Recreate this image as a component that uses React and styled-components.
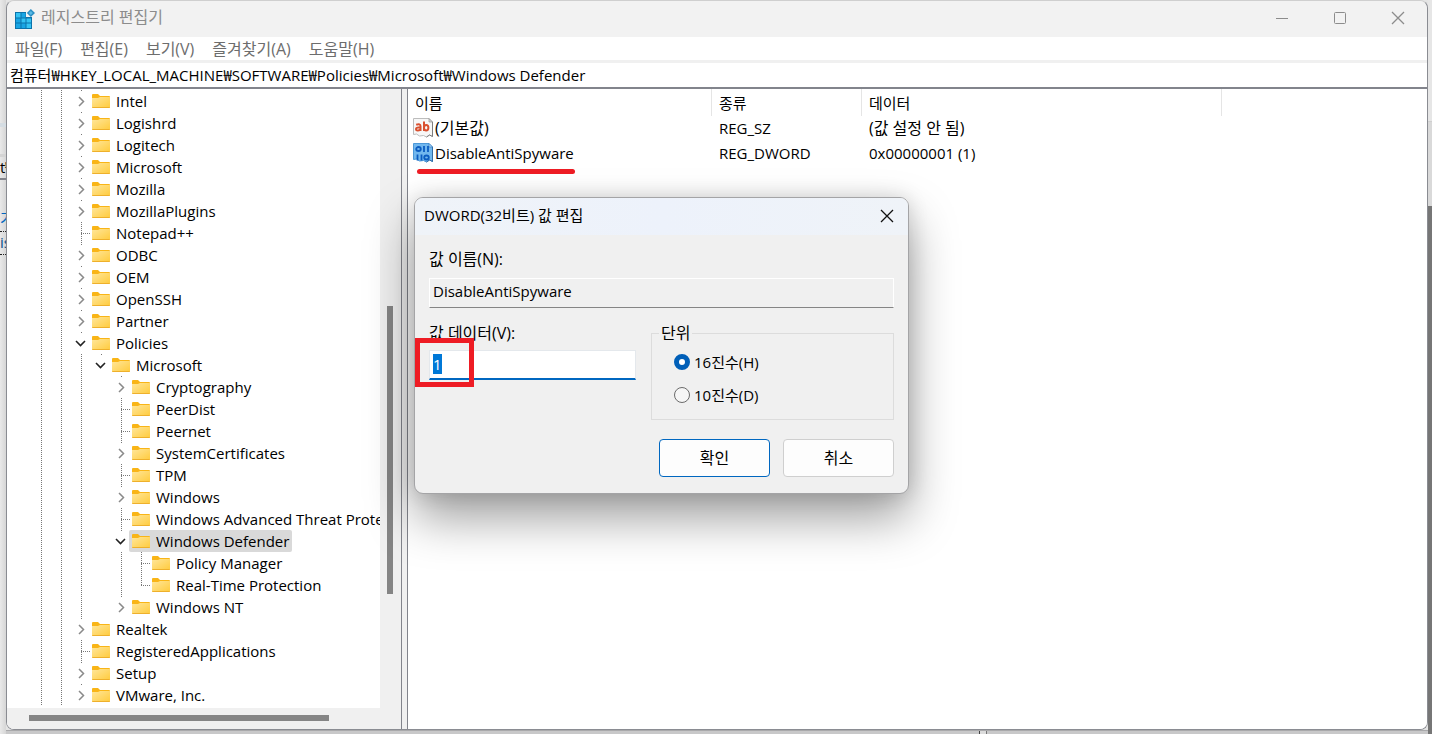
import React, { useEffect, useRef, useState } from "react";
import styled, { createGlobalStyle } from "styled-components";

const GlobalStyle = createGlobalStyle`
  *, *::before, *::after { box-sizing: border-box; }
  body {
    margin: 0;
    overflow: hidden;
    color: #000;
    font-family: "Open Sans", "Noto Sans CJK KR", sans-serif;
    font-size: 15px;
    line-height: 20px;
  }
  button, input { font: inherit; color: inherit; }
`;

const Desktop = styled.div`
  display: grid;
  grid-template-columns: 6px minmax(0, 1fr) 4px;
  grid-template-rows: minmax(0, 1fr) 4px;
  height: 100vh;
  background: #e4e4e4;
`;

const LeftBackdrop = styled.div`
  grid-row: 1 / 3;
  display: flex;
  flex-direction: column;
  overflow: hidden;
  white-space: nowrap;
  background: linear-gradient(90deg, #e9e9e9, #d6d6d6);
`;

const BackdropStrip = styled.div`
  flex: none;
  height: ${(p) => p.$h}px;
  background: ${(p) => p.$bg || "transparent"};
  color: ${(p) => p.$color || "#000"};
  border-bottom: ${(p) => p.$line || "none"};
`;

const RightBackdrop = styled.div`
  grid-column: 3;
  grid-row: 1 / 3;
  display: flex;
  flex-direction: column;
  background: #767676;
`;

const BottomBackdrop = styled.div`
  grid-column: 2;
  grid-row: 2;
  display: flex;
  padding-left: 973px;
  background: #c8c8c9;
  border-top: 1px solid #a9a9ab;
`;

const PaneEdge = styled.span`
  width: 8px;
  background: #dcdcdc;
  border-left: 1px solid #444;
  border-right: 1px solid #777;
`;

const Window = styled.main`
  position: relative;
  display: flex;
  flex-direction: column;
  min-width: 0;
  background: #f0f0f0;
  border: 1px solid #8a8c92;
  border-top-color: #cfcfcf;
  border-radius: 8px;
`;

const TitleBar = styled.header`
  display: flex;
  align-items: center;
  flex: none;
  height: 36px;
  padding-left: 8px;
  background: #f2f2f2;
  border-radius: 8px 8px 0 0;
  color: #8c8c8c;
`;

const WindowTitle = styled.h1`
  flex: 1;
  margin: 0 0 0 6px;
  padding-bottom: 4px;
  font-size: 16px;
  font-weight: 400;
  line-height: 20px;
`;

const CaptionButton = styled.button`
  display: grid;
  place-items: center;
  width: ${(p) => p.$w || 58}px;
  height: ${(p) => p.$h || 36}px;
  padding: 0 0 2px;
  border: 0;
  background: transparent;
`;

const MenuBar = styled.nav`
  display: flex;
  align-items: center;
  flex: none;
  gap: 18px;
  height: 23px;
  padding-left: 8px;
  background: #fff;
`;

const MenuButton = styled.button`
  padding: 0;
  border: 0;
  background: transparent;
  color: #6d6d6d;
  font-size: 16px;
  line-height: 20px;
`;

const AddressInput = styled.input`
  flex: none;
  display: block;
  height: 29px;
  width: 100%;
  padding: 0 3px 1px;
  border: 0;
  border-top: 3px solid #f0f0f0;
  border-bottom: 2px solid #82848c;
  border-radius: 0;
  outline: 0;
  background: #fff;
`;

const Body = styled.div`
  display: grid;
  grid-template-columns: 395px minmax(0, 1fr);
  gap: 5px;
  flex: 1;
  min-height: 0;
`;

const TreePane = styled.section`
  display: grid;
  grid-template-columns: minmax(0, 1fr) 21px;
  grid-template-rows: minmax(0, 1fr) 21px;
  min-height: 0;
  border-right: 1px solid #82848c;
  border-radius: 0 0 0 7px;
  background: #f0f0f0;
`;

const TreeView = styled.ul`
  margin: 0;
  padding: 1px 0 0 24px;
  overflow: hidden;
  list-style: none;
  background: #fff;
`;

const TreeRow = styled.li`
  display: flex;
  height: 22px;
  white-space: nowrap;
`;

const dots = "repeating-linear-gradient(#777 0 1px, transparent 1px 2px)";

const Guide = styled.span`
  flex: none;
  width: 20px;
  height: 22px;
  background-image: ${(p) => (p.$on ? dots : "none")};
  background-size: 1px 100%;
  background-position: 10px 0;
  background-repeat: no-repeat;
`;

const Branch = styled(Guide)`
  background-image: ${dots}, repeating-linear-gradient(90deg, #777 0 1px, transparent 1px 2px);
  background-size: 1px ${(p) => (p.$last ? "12px" : "100%")}, 9px 1px;
  background-position: 10px 0, 10px 11px;
`;

const Toggle = styled.button`
  flex: none;
  display: grid;
  place-items: center;
  width: 20px;
  height: 22px;
  padding: 0;
  border: 0;
  background: linear-gradient(#777, #777) 10px 0 / 1px 1px no-repeat;
`;

const NodeLabel = styled.span`
  display: flex;
  align-items: center;
  gap: 6px;
  height: 22px;
  margin-left: -2px;
  padding: 0 3px;
  border-radius: 2px;
  background: ${(p) => (p.$selected ? "#d9d9d9" : "transparent")};
`;

const ScrollTrack = styled.div`
  display: flex;
  flex-direction: ${(p) => (p.$vertical ? "column" : "row")};
  align-items: center;
  padding-right: ${(p) => (p.$vertical ? 2 : 0)}px;
  padding-bottom: ${(p) => (p.$vertical ? 0 : 2)}px;
  background: #f0f0f0;
  border-radius: 0 0 0 7px;
`;

const Space = styled.span`
  flex: ${(p) => p.$n} 0 0;
`;

const Thumb = styled.span`
  flex: ${(p) => p.$n} 0 0;
  ${(p) => (p.$vertical ? "width" : "height")}: 6px;
  background: #858585;
`;

const ListPane = styled.section`
  position: relative;
  min-width: 0;
  border-left: 1px solid #82848c;
  border-radius: 0 0 7px 0;
  background: #fff;
`;

const ValueTable = styled.table`
  width: 100%;
  table-layout: fixed;
  border-collapse: separate;
  border-spacing: 0;
  white-space: nowrap;
`;

const HeadCell = styled.th`
  width: ${(p) => (p.$w ? p.$w + "px" : "auto")};
  height: 27px;
  padding: 0 7px;
  border-right: ${(p) => (p.$w ? "1px solid #e5e5e5" : "none")};
  font-weight: 400;
  text-align: left;
`;

const Cell = styled.td`
  height: ${(p) => (p.$first ? 24 : 25)}px;
  padding: 0 7px 0 ${(p) => (p.$name ? 5 : 7)}px;
  font-size: ${(p) => (p.$ko ? 16 : 15)}px;
`;

const ValueName = styled.span`
  display: flex;
  align-items: center;
  gap: 2px;
`;

const Underline = styled.span`
  position: absolute;
  top: 80px;
  left: 9px;
  width: 158px;
  height: 5px;
  border-radius: 3px;
  background: #ee1c24;
`;

const Dialog = styled.form`
  position: absolute;
  top: 196px;
  left: 407px;
  width: 495px;
  border: 1px solid #a4a4a6;
  border-radius: 9px;
  background: #f0f0f0;
  box-shadow: 0 24px 48px rgba(0, 0, 0, 0.38), 0 0 20px rgba(0, 0, 0, 0.14);
`;

const DialogBar = styled.header`
  display: flex;
  align-items: center;
  justify-content: space-between;
  height: 37px;
  padding-left: 9px;
  border-radius: 8px 8px 0 0;
  background: linear-gradient(90deg, #eff3f8, #edf2fb 50%, #eff3f8);
`;

const DialogTitle = styled.h2`
  margin: 0;
  padding-bottom: 3px;
  font-size: 15px;
  font-weight: 400;
  line-height: 20px;
`;

const DialogBody = styled.div`
  padding: 14px 14px 16px;
`;

const FieldLabel = styled.label`
  display: block;
  height: 20px;
  font-size: 16px;
  line-height: 20px;
`;

const NameInput = styled.input`
  display: block;
  width: 100%;
  height: 30px;
  margin: 9px 0 15px;
  padding: 0 3px 4px;
  border: 1px solid #fff;
  border-bottom-color: #858585;
  outline: 0;
  background: #f0f0f0;
`;

const Columns = styled.div`
  display: grid;
  grid-template-columns: 207px minmax(0, 1fr);
  gap: 15px;
`;

const DataInput = styled.input`
  display: block;
  width: 100%;
  height: 30px;
  margin-top: 7px;
  padding: 0 3px 2px;
  border: 1px solid #e4e8ec;
  border-bottom: 2px solid #0067c0;
  outline: 0;
  background: #fff;
  &::selection { background: #0078d7; color: #fff; }
`;

const BaseGroup = styled.fieldset`
  display: flex;
  flex-direction: column;
  gap: 13px;
  min-width: 0;
  height: 97px;
  margin: 0;
  padding: 9px 22px 0;
  border: 1px solid #dcdcdc;
`;

const BaseLegend = styled.legend`
  margin-left: -15px;
  padding: 0 2px;
  font-size: 16px;
  line-height: 20px;
`;

const RadioLabel = styled.label`
  display: flex;
  align-items: center;
  gap: 4px;
  height: 20px;
`;

const Radio = styled.input`
  appearance: none;
  width: 16px;
  height: 16px;
  margin: 0;
  border: 1px solid #6b6b6b;
  border-radius: 50%;
  background: #f6f6f6;
  &:checked {
    border: 5px solid #005fb8;
    background: #fff;
  }
`;

const Actions = styled.div`
  display: flex;
  justify-content: flex-end;
  gap: 13px;
  margin-top: 19px;
`;

const ActionButton = styled.button`
  width: 111px;
  height: 38px;
  padding: 0;
  border: 1px solid ${(p) => (p.$primary ? "#0067c0" : "#cfcfcf")};
  border-radius: 4px;
  background: #fdfdfd;
  font-size: 16px;
`;

const RedFrame = styled.span`
  position: absolute;
  top: 140px;
  left: 0;
  width: 59px;
  height: 49px;
  border: 5px solid #ee1c24;
  pointer-events: none;
`;

function FolderIcon() {
  return (
    <svg width="18" height="14" viewBox="0 0 18 14" aria-hidden="true">
      <defs>
        <linearGradient id="folder" x1="0" y1="0" x2="1" y2="1">
          <stop offset="0" stopColor="#ffe69a" />
          <stop offset="1" stopColor="#ffcb3d" />
        </linearGradient>
      </defs>
      <path d="M0 1q0-1 1-1h5l2 2h9q1 0 1 1v4H0z" fill="#f9b517" />
      <path d="M0 4h6l2-1h10v10q0 1-1 1H1q-1 0-1-1z" fill="url(#folder)" />
      <path d="M0 13h18q0 1-1 1H1q-1 0-1-1z" fill="#eeb02c" />
    </svg>
  );
}

function Chevron({ open }) {
  return (
    <svg width="14" height="14" viewBox="0 0 14 14" fill="none" aria-hidden="true">
      {open ? (
        <path d="M2 5l4.500 4.500L11 5" stroke="#222" strokeWidth="1.600" />
      ) : (
        <path d="M5 3l4.500 4.500L5 12" stroke="#8a8a8a" strokeWidth="1.500" />
      )}
    </svg>
  );
}

function RegeditIcon() {
  return (
    <svg width="20" height="20" viewBox="0 0 20 20" aria-hidden="true">
      <path d="M0 3h11v5h6v12H0z" fill="#0b73ab" />
      <path d="M1 4h4.500v4.500H1zM6.500 9.500h4v4h-4zM11.500 14.500H16V19h-4.500zM11.500 9.500H16v4h-4.500z" fill="#35c3f3" />
      <path d="M6.500 4h4v4.500h-4zM1 9.500h4.500v4H1zM1 14.500h4.500V19H1zM6.500 14.500h4V19h-4z" fill="#19a5e4" />
      <path d="M15.800 0l4.200 4-4.200 4-4-4z" fill="#2b8fc4" />
      <path d="M15.800 2l2 2-2 2-2-2z" fill="#5ab9e4" />
    </svg>
  );
}

function StringIcon() {
  return (
    <svg width="20" height="20" viewBox="0 0 20 20" aria-hidden="true">
      <path d="M.5.5H16l3.500 3.500v14.500l-3-1.500-3 2-3-1.500-4 .5-3-2-3 .5z" fill="#f7f7f7" stroke="#bcbcbc" />
      <path d="M19.500 4v14.500l-3-1.500-3 2" fill="none" stroke="#7e7e7e" />
      <path d="M16 .5V4h3.500z" fill="#d8d8d8" stroke="#8f8f8f" strokeWidth=".7" />
      <g fill="none" stroke="#d9502f" strokeWidth="2">
        <path d="M3.200 6.800q4.300-1.500 4.300 1.500v4.700M7.500 9.300q-4.500 0-4.500 1.700t2 1.500q2 0 2.500-1.500" />
        <path d="M11 3.500V13" />
        <ellipse cx="13.200" cy="9.700" rx="2.200" ry="2.700" />
      </g>
    </svg>
  );
}

function BinaryIcon() {
  return (
    <svg width="20" height="20" viewBox="0 0 20 20" aria-hidden="true">
      <path d="M.5.5H16l3.500 3.500v14.500l-3-1.500-3 2-3-1.500-4 .5-3-2-3 .5z" fill="#71b7ee" stroke="#4c98d8" />
      <path d="M16 .5V4h3.500z" fill="#b5dafa" stroke="#3a7fc0" strokeWidth=".7" />
      <path d="M19.500 4v14.500l-3-1.500-3 2" fill="none" stroke="#326ca5" />
      <g fill="none" stroke="#0b5cc0" strokeWidth="1.800">
        <ellipse cx="5.500" cy="6" rx="2.300" ry="2" />
        <path d="M11 3v6M15 3v6M4.500 11.500v6M8.500 11.500v6" />
        <ellipse cx="13.500" cy="14.500" rx="2.300" ry="2" />
      </g>
    </svg>
  );
}

function CloseIcon({ color }) {
  return (
    <svg width="14" height="14" viewBox="0 0 14 14" aria-hidden="true">
      <path d="M1 1l12 12M13 1L1 13" stroke={color} strokeWidth="1.300" />
    </svg>
  );
}

/* guides: one flag per ancestor column; state: closed, open, leaf or last */
const TOP = [1, 1];
const SUB = [1, 1, 1, 0];
const LEAF = [1, 1, 1, 0, 1];
const nodes = [
  ["Intel", TOP, "closed"],
  ["Logishrd", TOP, "closed"],
  ["Logitech", TOP, "closed"],
  ["Microsoft", TOP, "closed"],
  ["Mozilla", TOP, "closed"],
  ["MozillaPlugins", TOP, "closed"],
  ["Notepad++", TOP, "leaf"],
  ["ODBC", TOP, "closed"],
  ["OEM", TOP, "closed"],
  ["OpenSSH", TOP, "closed"],
  ["Partner", TOP, "closed"],
  ["Policies", TOP, "open"],
  ["Microsoft", [1, 1, 1], "open"],
  ["Cryptography", SUB, "closed"],
  ["PeerDist", SUB, "leaf"],
  ["Peernet", SUB, "leaf"],
  ["SystemCertificates", SUB, "closed"],
  ["TPM", SUB, "leaf"],
  ["Windows", SUB, "closed"],
  ["Windows Advanced Threat Protection", SUB, "leaf"],
  ["Windows Defender", SUB, "open"],
  ["Policy Manager", LEAF, "leaf"],
  ["Real-Time Protection", LEAF, "last"],
  ["Windows NT", SUB, "closed"],
  ["Realtek", TOP, "closed"],
  ["RegisteredApplications", TOP, "leaf"],
  ["Setup", TOP, "closed"],
  ["VMware, Inc.", TOP, "closed"],
];

const menus = ["파일(F)", "편집(E)", "보기(V)", "즐겨찾기(A)", "도움말(H)"];

export default function App() {
  const dataRef = useRef(null);
  const [base, setBase] = useState("hex");

  useEffect(() => {
    dataRef.current.focus({ preventScroll: true });
    dataRef.current.select();
  }, []);

  return (
    <>
      <GlobalStyle />
      <Desktop>
        <LeftBackdrop aria-hidden="true">
          <BackdropStrip $h={127} $line="4px solid #d5dde3" />
          <BackdropStrip $h={30} $line="3px solid #d4d4d4" />
          <BackdropStrip $h={23} $line="2px solid #82848c">t₩</BackdropStrip>
          <BackdropStrip $h={28} />
          <BackdropStrip $h={24} $color="#0067c0" $line="1px dotted #222">기</BackdropStrip>
          <BackdropStrip $h={23} $color="#0b4f8a" $line="1px dotted #222">is</BackdropStrip>
        </LeftBackdrop>
        <Window>
          <TitleBar>
            <RegeditIcon />
            <WindowTitle>레지스트리 편집기</WindowTitle>
            <CaptionButton type="button" aria-label="최소화">
              <svg width="12" height="12" viewBox="0 0 12 12"><path d="M0 6.500h12" stroke="#8c8c8c" /></svg>
            </CaptionButton>
            <CaptionButton type="button" aria-label="최대화">
              <svg width="12" height="12" viewBox="0 0 12 12"><rect x=".5" y=".5" width="11" height="11" rx="1" fill="none" stroke="#8c8c8c" /></svg>
            </CaptionButton>
            <CaptionButton type="button" aria-label="닫기">
              <CloseIcon color="#8c8c8c" />
            </CaptionButton>
          </TitleBar>
          <MenuBar>
            {menus.map((m) => (
              <MenuButton type="button" key={m}>{m}</MenuButton>
            ))}
          </MenuBar>
          <AddressInput
            aria-label="주소"
            defaultValue="컴퓨터₩HKEY_LOCAL_MACHINE₩SOFTWARE₩Policies₩Microsoft₩Windows Defender"
          />
          <Body>
            <TreePane>
              <TreeView>
                {nodes.map(([name, guides, state], i) => (
                  <TreeRow key={i}>
                    {guides.map((on, g) => <Guide key={g} $on={on} />)}
                    {state === "closed" || state === "open" ? (
                      <Toggle type="button" aria-label={name} aria-expanded={state === "open"}>
                        <Chevron open={state === "open"} />
                      </Toggle>
                    ) : (
                      <Branch $last={state === "last"} />
                    )}
                    <NodeLabel $selected={name === "Windows Defender"}>
                      <FolderIcon />
                      {name}
                    </NodeLabel>
                  </TreeRow>
                ))}
              </TreeView>
              <ScrollTrack $vertical>
                <Space $n={217} />
                <Thumb $vertical $n={288} />
                <Space $n={114} />
              </ScrollTrack>
              <ScrollTrack>
                <Space $n={22} />
                <Thumb $n={300} />
                <Space $n={51} />
              </ScrollTrack>
            </TreePane>
            <ListPane>
              <ValueTable>
                <thead>
                  <tr>
                    <HeadCell $w={304}>이름</HeadCell>
                    <HeadCell $w={150}>종류</HeadCell>
                    <HeadCell $w={360}>데이터</HeadCell>
                    <HeadCell as="td" />
                  </tr>
                </thead>
                <tbody>
                  <tr>
                    <Cell $first $name $ko><ValueName><StringIcon />(기본값)</ValueName></Cell>
                    <Cell $first>REG_SZ</Cell>
                    <Cell $first $ko>(값 설정 안 됨)</Cell>
                  </tr>
                  <tr>
                    <Cell $name><ValueName><BinaryIcon />DisableAntiSpyware</ValueName></Cell>
                    <Cell>REG_DWORD</Cell>
                    <Cell>0x00000001 (1)</Cell>
                  </tr>
                </tbody>
              </ValueTable>
              <Underline />
            </ListPane>
          </Body>
          <Dialog role="dialog" aria-labelledby="dialog-title" onSubmit={(e) => e.preventDefault()}>
            <DialogBar>
              <DialogTitle id="dialog-title">DWORD(32비트) 값 편집</DialogTitle>
              <CaptionButton type="button" aria-label="닫기" $w={42}>
                <CloseIcon color="#111" />
              </CaptionButton>
            </DialogBar>
            <DialogBody>
              <FieldLabel htmlFor="value-name">값 이름(N):</FieldLabel>
              <NameInput id="value-name" readOnly value="DisableAntiSpyware" />
              <Columns>
                <div>
                  <FieldLabel htmlFor="value-data">값 데이터(V):</FieldLabel>
                  <DataInput id="value-data" ref={dataRef} defaultValue="1" />
                </div>
                <BaseGroup>
                  <BaseLegend>단위</BaseLegend>
                  <RadioLabel>
                    <Radio type="radio" name="base" checked={base === "hex"} onChange={() => setBase("hex")} />
                    16진수(H)
                  </RadioLabel>
                  <RadioLabel>
                    <Radio type="radio" name="base" checked={base === "dec"} onChange={() => setBase("dec")} />
                    10진수(D)
                  </RadioLabel>
                </BaseGroup>
              </Columns>
              <Actions>
                <ActionButton $primary>확인</ActionButton>
                <ActionButton type="button">취소</ActionButton>
              </Actions>
            </DialogBody>
            <RedFrame />
          </Dialog>
        </Window>
        <RightBackdrop aria-hidden="true">
          <BackdropStrip $h={122} $bg="#e6e6e6" $line="1px solid #cfcfcf" />
          <BackdropStrip $h={84} $bg="#d9d9d9" />
        </RightBackdrop>
        <BottomBackdrop aria-hidden="true"><PaneEdge /></BottomBackdrop>
      </Desktop>
    </>
  );
}
